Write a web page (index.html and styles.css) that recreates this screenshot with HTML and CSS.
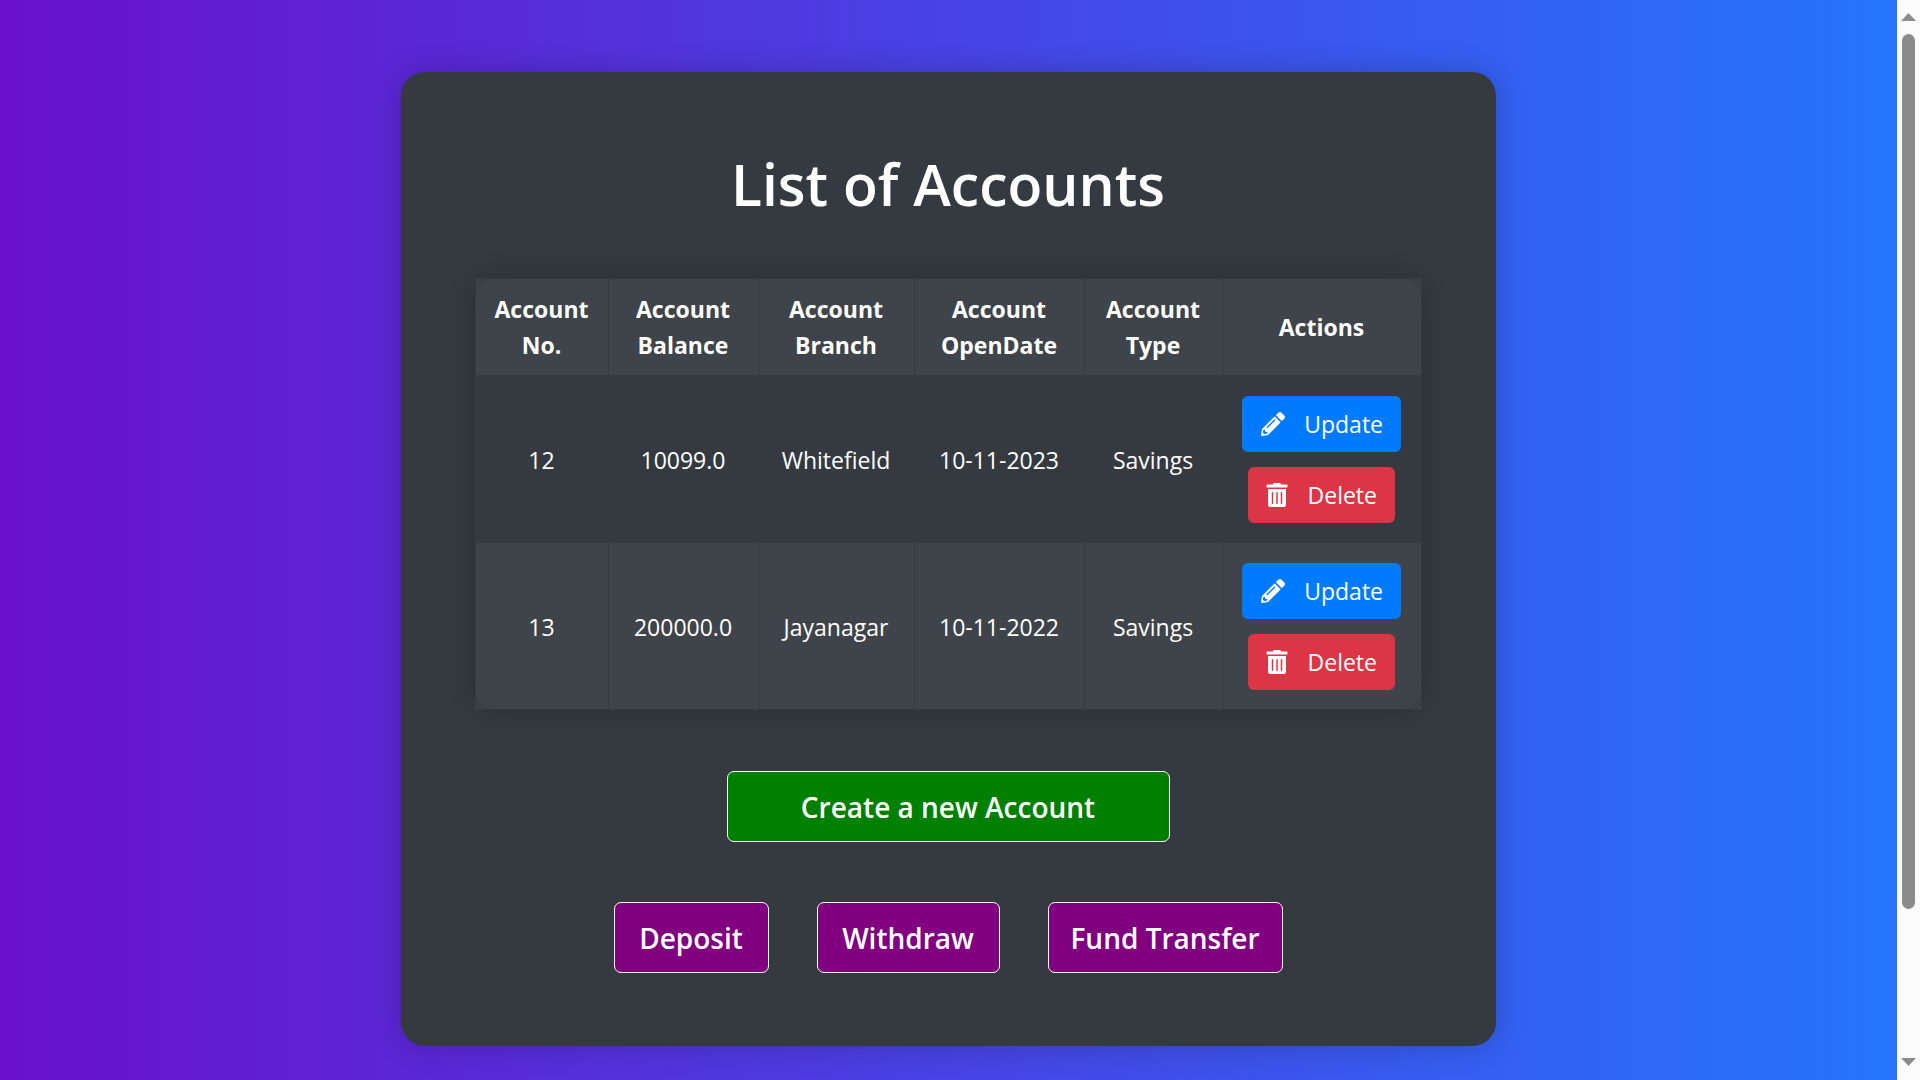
FILE: index.html
```html
<!DOCTYPE html>
<html lang="en">
<head>
<meta charset="utf-8">
<meta name="viewport" content="width=device-width, initial-scale=1">
<title>List of Accounts</title>
<link rel="stylesheet" href="styles.css">
</head>
<body>
<svg class="sprite" aria-hidden="true">
  <symbol id="pencil" viewBox="0 0 512 512"><path d="M497.9 142.1l-46.1 46.1c-4.7 4.7-12.3 4.7-17 0l-111-111c-4.7-4.7-4.7-12.3 0-17l46.1-46.1c18.7-18.7 49.1-18.7 67.9 0l60.1 60.1c18.8 18.7 18.8 49.1 0 67.9zM284.2 99.8L21.6 362.4.4 483.9c-2.9 16.4 11.4 30.6 27.8 27.8l121.5-21.3 262.6-262.6c4.7-4.7 4.7-12.3 0-17l-111-111c-4.8-4.7-12.4-4.7-17.1 0zM124.1 339.9c-5.5-5.5-5.5-14.3 0-19.8l154-154c5.5-5.5 14.3-5.5 19.8 0s5.5 14.3 0 19.8l-154 154c-5.5 5.5-14.3 5.5-19.8 0zM88 424h48v36.3l-64.5 11.3-31.1-31.1L51.7 376H88v48z"/></symbol>
  <symbol id="trash" viewBox="0 0 448 512"><path d="M32 464a48 48 0 0 0 48 48h288a48 48 0 0 0 48-48V128H32zm272-256a16 16 0 0 1 32 0v224a16 16 0 0 1-32 0zm-96 0a16 16 0 0 1 32 0v224a16 16 0 0 1-32 0zm-96 0a16 16 0 0 1 32 0v224a16 16 0 0 1-32 0zM432 32H312l-9.4-18.7A24 24 0 0 0 281.1 0H166.800a23.720 23.720 0 0 0-21.400 13.300L136 32H16A16 16 0 0 0 0 48v32a16 16 0 0 0 16 16h416a16 16 0 0 0 16-16V48a16 16 0 0 0-16-16z"/></symbol>
</svg>
<main class="card">
  <h1 class="title">List of Accounts</h1>
  <table class="accounts">
    <colgroup>
      <col class="col-no"><col class="col-balance"><col class="col-branch"><col class="col-date"><col class="col-type"><col class="col-actions">
    </colgroup>
    <thead>
      <tr>
        <th scope="col">Account No.</th>
        <th scope="col">Account Balance</th>
        <th scope="col">Account Branch</th>
        <th scope="col">Account OpenDate</th>
        <th scope="col">Account Type</th>
        <th scope="col">Actions</th>
      </tr>
    </thead>
    <tbody>
      <tr>
        <td>12</td>
        <td>10099.0</td>
        <td>Whitefield</td>
        <td>10-11-2023</td>
        <td>Savings</td>
        <td>
          <div class="actions">
            <a class="btn btn-update" href="#update-12"><svg class="icon-pencil" aria-hidden="true"><use href="#pencil"/></svg>Update</a>
            <a class="btn btn-delete" href="#delete-12"><svg class="icon-trash" aria-hidden="true"><use href="#trash"/></svg>Delete</a>
          </div>
        </td>
      </tr>
      <tr>
        <td>13</td>
        <td>200000.0</td>
        <td>Jayanagar</td>
        <td>10-11-2022</td>
        <td>Savings</td>
        <td>
          <div class="actions">
            <a class="btn btn-update" href="#update-13"><svg class="icon-pencil" aria-hidden="true"><use href="#pencil"/></svg>Update</a>
            <a class="btn btn-delete" href="#delete-13"><svg class="icon-trash" aria-hidden="true"><use href="#trash"/></svg>Delete</a>
          </div>
        </td>
      </tr>
    </tbody>
  </table>
  <button class="big-btn create" type="button">Create a new Account</button>
  <div class="operations">
    <button class="big-btn deposit" type="button">Deposit</button>
    <button class="big-btn withdraw" type="button">Withdraw</button>
    <button class="big-btn transfer" type="button">Fund Transfer</button>
  </div>
</main>
<div class="scrollbar" aria-hidden="true">
  <svg class="arrow" viewBox="0 0 15 8"><path d="M7.500 0L15 8H0z"/></svg>
  <div class="track"><div class="thumb"></div></div>
  <svg class="arrow" viewBox="0 0 15 8"><path d="M7.500 8L15 0H0z"/></svg>
</div>
</body>
</html>
```
FILE: styles.css
```css
* {
  box-sizing: border-box;
}

body {
  margin: 0;
  min-height: 100vh;
  padding: 72px 23px 34px 0;
  background: linear-gradient(to right, #6a11cb, #2575fc);
  background-size: calc(100% - 23px) 100%;
  color: #fff;
  font-family: "Segoe UI", "Open Sans", "Noto Sans", sans-serif;
  font-size: 23px;
  line-height: 36px;
}

.sprite {
  position: absolute;
  width: 0;
  height: 0;
}

.card {
  display: flex;
  flex-direction: column;
  align-items: center;
  max-width: 1095px;
  margin: 0 auto;
  padding: 74px 75px 73px 74px;
  border-radius: 24px;
  background: #343a40;
  box-shadow: 0 0 30px rgba(0, 0, 0, 0.2);
}

.title {
  margin: 0 0 56px;
  font-size: 57px;
  font-weight: 600;
  line-height: 76px;
}

.accounts {
  width: 100%;
  table-layout: fixed;
  border-collapse: collapse;
  border-radius: 22px;
  background: #343a40;
  box-shadow: 0 0 30px rgba(0, 0, 0, 0.2);
  text-align: center;
}

.col-no { width: 133px; }
.col-balance { width: 150px; }
.col-branch { width: 156px; }
.col-date { width: 170px; }
.col-type { width: 138px; }
.col-actions { width: 199px; }

.accounts th,
.accounts td {
  border: 1px solid #343a40;
  vertical-align: middle;
}

.accounts th {
  padding: 12px 8px;
  background: rgba(255, 255, 255, 0.05);
  font-weight: 700;
}

.accounts td {
  padding: 20px 8px 19px;
}

.accounts tbody tr:nth-child(even) td {
  background: rgba(255, 255, 255, 0.05);
}

.actions {
  display: flex;
  flex-direction: column;
  align-items: center;
  gap: 15px;
}

.btn {
  display: flex;
  align-items: center;
  justify-content: space-between;
  height: 56px;
  padding: 0 18px;
  border-radius: 6px;
  color: #fff;
  text-decoration: none;
}

.btn-update {
  width: 159px;
  background: #007bff;
}

.btn-delete {
  width: 147px;
  background: #dc3545;
}

.btn svg {
  height: 24px;
  fill: currentColor;
}

.icon-pencil {
  width: 26px;
}

.icon-trash {
  width: 22px;
}

.big-btn {
  height: 71px;
  padding: 0;
  border: 1px solid #fff;
  border-radius: 7px;
  color: #fff;
  font: inherit;
  font-size: 28px;
  font-weight: 600;
}

.create {
  width: 443px;
  margin: 61px 0 60px;
  background: #008000;
}

.operations {
  display: flex;
  flex-wrap: wrap;
  justify-content: center;
  gap: 48px;
}

.operations .big-btn {
  background: #800080;
}

.deposit { width: 155px; }
.withdraw { width: 183px; }
.transfer { width: 235px; }

.scrollbar {
  position: fixed;
  top: 0;
  right: 0;
  bottom: 0;
  display: flex;
  flex-direction: column;
  align-items: center;
  gap: 13px;
  width: 23px;
  padding: 13px 0 14px;
  background: #fcfcfc;
}

.arrow {
  width: 15px;
  height: 8px;
  fill: #8b8b8b;
}

.track {
  display: flex;
  flex: 1;
  width: 13px;
  padding-bottom: 136px;
}

.thumb {
  flex: 1;
  border-radius: 7px;
  background: #8b8b8b;
}
```
